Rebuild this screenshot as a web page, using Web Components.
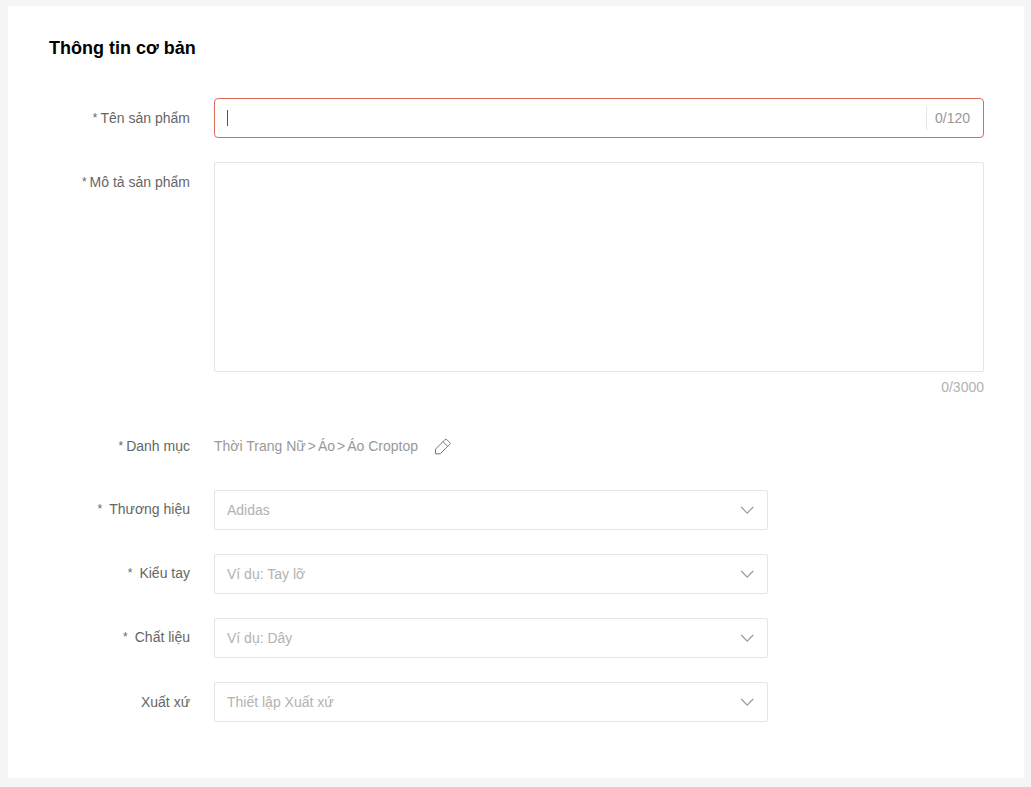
<!DOCTYPE html>
<html lang="vi">
<head>
<meta charset="utf-8">
<meta name="viewport" content="width=device-width, initial-scale=1">
<title>Thông tin cơ bản</title>
<style>
  body {
    margin: 6px 7px 8px 8px;
    background: #f5f5f5;
    color: #666;
    font: 14px/20px "Liberation Sans", Arial, sans-serif;
  }
</style>
</head>
<body>
<form-card heading="Thông tin cơ bản">
  <text-field label="Tên sản phẩm" maxlength="120" required invalid></text-field>
  <textarea-field label="Mô tả sản phẩm" maxlength="3000" required></textarea-field>
  <category-field label="Danh mục" path="Thời Trang Nữ/Áo/Áo Croptop" required></category-field>
  <select-field label="Thương hiệu" placeholder="Adidas" required></select-field>
  <select-field label="Kiểu tay" placeholder="Ví dụ: Tay lỡ" required></select-field>
  <select-field label="Chất liệu" placeholder="Ví dụ: Dây" required></select-field>
  <select-field label="Xuất xứ" placeholder="Thiết lập Xuất xứ"></select-field>
</form-card>

<script>
const fieldStyle = `
  * {
    box-sizing: border-box;
  }
  :host {
    display: grid;
    grid-template-columns: 141px minmax(0, 1fr);
    column-gap: 24px;
  }
  .label {
    display: flex;
    justify-content: flex-end;
    height: 40px;
    line-height: 40px;
    white-space: nowrap;
  }
  .star {
    margin-right: var(--star-gap, 3px);
    font-size: 12px;
  }
  input, textarea, select {
    display: block;
    width: 100%;
    margin: 0;
    border: 1px solid #e5e5e5;
    border-radius: 2px;
    background: #fff;
    color: #333;
    font: inherit;
    outline: none;
  }
`

const cardTemplate = document.createElement('template')
cardTemplate.innerHTML = `
  <style>
  :host {
    display: block;
    padding: 30px 40px 56px 41px;
    background: #fff;
    box-shadow: 0 1px 4px rgba(0, 0, 0, 0.14);
  }
  h2 {
    margin: 0 0 38px;
    color: #000;
    font-size: 18px;
    line-height: 24px;
  }
  form {
    display: grid;
    row-gap: 24px;
  }
  </style>
  <h2></h2>
  <form><slot></slot></form>
`

class FormCard extends HTMLElement {
  constructor () {
    super()
    this.attachShadow({ mode: 'open' }).append(cardTemplate.content.cloneNode(true))
  }

  connectedCallback () {
    this.shadowRoot.querySelector('h2').textContent = this.getAttribute('heading')
  }
}

/**
 * Shared row: a right-aligned label beside whatever control() returns.
 */
class BaseField extends HTMLElement {
  constructor () {
    super()
    this.attachShadow({ mode: 'open' })
  }

  connectedCallback () {
    const star = this.hasAttribute('required') ? '<span class="star">*</span>' : ''
    this.shadowRoot.innerHTML = `
      <style>${fieldStyle}${this.styles()}</style>
      <label class="label" for="control">${star}<span>${this.getAttribute('label')}</span></label>
      ${this.control()}
    `
    this.bindCounter()
  }

  styles () {
    return ''
  }

  // Keep the "typed/limit" text in step with the control
  bindCounter () {
    const counter = this.shadowRoot.querySelector('.counter')
    if (!counter) return
    const control = this.shadowRoot.getElementById('control')
    const update = () => {
      counter.textContent = `${control.value.length}/${control.maxLength}`
    }
    control.addEventListener('input', update)
    update()
  }
}

class TextField extends BaseField {
  styles () {
    return `
      .box {
        display: flex;
        align-items: center;
        height: 40px;
        padding: 0 13px 0 12px;
        border: 1px solid #e5e5e5;
        border-radius: 4px;
      }
      :host([invalid]) .box {
        border-color: #dc6a58;
      }
      .caret {
        width: 1px;
        height: 16px;
        background: #555;
      }
      .box:focus-within .caret {
        background: transparent;
      }
      input {
        flex: 1;
        min-width: 0;
        border: 0;
        padding: 0;
      }
      .counter {
        padding-left: 8px;
        border-left: 1px solid #e5e5e5;
        color: #999;
        line-height: 24px;
      }
    `
  }

  control () {
    return `
      <div class="box">
        <span class="caret" aria-hidden="true"></span>
        <input id="control" type="text" maxlength="${this.getAttribute('maxlength')}">
        <span class="counter"></span>
      </div>
    `
  }
}

class TextareaField extends BaseField {
  styles () {
    return `
      textarea {
        height: 210px;
        padding: 8px 12px;
        resize: none;
      }
      .counter {
        color: #b2b2b2;
        line-height: 30px;
        text-align: right;
      }
    `
  }

  control () {
    return `
      <div>
        <textarea id="control" maxlength="${this.getAttribute('maxlength')}"></textarea>
        <div class="counter"></div>
      </div>
    `
  }
}

class CategoryField extends BaseField {
  styles () {
    return `
      .path {
        display: flex;
        align-items: center;
        color: #999;
      }
      .arrow {
        margin: 0 2px;
      }
      button {
        display: flex;
        margin: 0 0 0 16px;
        padding: 0;
        border: 0;
        background: none;
        color: #777;
        cursor: pointer;
      }
    `
  }

  control () {
    const path = this.getAttribute('path').split('/')
      .map(name => `<span>${name}</span>`)
      .join('<span class="arrow">&gt;</span>')
    return `
      <div class="path">
        ${path}
        <button id="control" type="button" aria-label="Sửa danh mục">
          <svg width="17" height="17" viewBox="0 0 17 17" fill="none" stroke="currentColor" stroke-linejoin="round">
            <path d="M1.5 15.8v-4.6l9.4-9.5a1.4 1.4 0 0 1 2 0l2.7 2.7a1.4 1.4 0 0 1 0 2l-9.4 9.4z"/>
            <path d="M9 3.7l4.6 4.6"/>
          </svg>
        </button>
      </div>
    `
  }
}

class SelectField extends BaseField {
  styles () {
    return `
      :host([required]) {
        --star-gap: 7px;
      }
      :host([required]) .label {
        line-height: 38px;
      }
      .box {
        display: grid;
        align-items: center;
        width: 100%;
        max-width: 554px;
      }
      select, svg {
        grid-area: 1 / 1;
      }
      select {
        height: 40px;
        padding: 0 36px 0 12px;
        color: #b2b2b2;
        appearance: none;
      }
      svg {
        justify-self: end;
        margin-right: 13px;
        pointer-events: none;
      }
    `
  }

  control () {
    return `
      <div class="box">
        <select id="control"><option value="">${this.getAttribute('placeholder')}</option></select>
        <svg width="16" height="16" viewBox="0 0 16 16" fill="none" stroke="#999" stroke-width="1.2">
          <path d="M2.2 5l6 6.2 6-6.2"/>
        </svg>
      </div>
    `
  }
}

customElements.define('form-card', FormCard)
customElements.define('text-field', TextField)
customElements.define('textarea-field', TextareaField)
customElements.define('category-field', CategoryField)
customElements.define('select-field', SelectField)
</script>
</body>
</html>
